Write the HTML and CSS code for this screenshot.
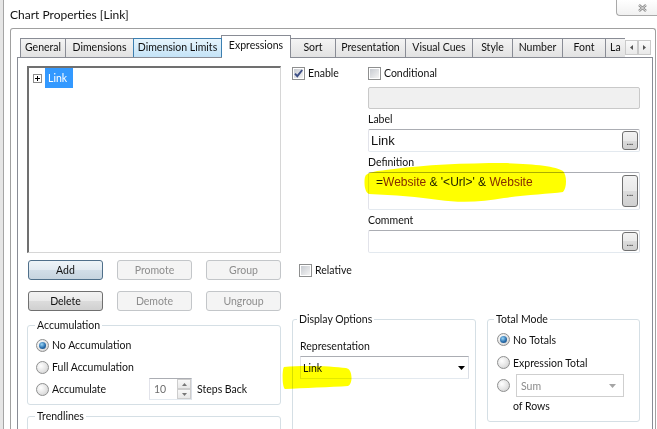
FILE: index.html
```html
<!DOCTYPE html>
<html lang="en">
<head>
    <meta charset="UTF-8">
    <meta name="viewport" content="width=device-width, initial-scale=1.0">
    <title>Chart Properties [Link]</title>
    <link rel="stylesheet" href="styles.css">
</head>
<body>

<div class="window">
<div class="frame">

    <div class="titlebar">
        <span class="title">Chart Properties [Link]</span>
        <div class="close-btn">
            <svg width="9" height="8" viewBox="0 0 9 8">
                <path d="M1 1l7 6M8 1L1 7" stroke="#8c8c8c" stroke-width="2.4" fill="none"/>
                <path d="M1 1l7 6M8 1L1 7" stroke="#fff" stroke-width="0.7" fill="none"/>
            </svg>
        </div>
    </div>

    <div class="client">
        <div class="tabstrip">
            <div class="tabs">
                <div class="tab">General</div>
                <div class="tab">Dimensions</div>
                <div class="tab hover">Dimension Limits</div>
                <div class="tab active">Expressions</div>
                <div class="tab">Sort</div>
                <div class="tab">Presentation</div>
                <div class="tab">Visual Cues</div>
                <div class="tab">Style</div>
                <div class="tab">Number</div>
                <div class="tab">Font</div>
                <div class="tab cut">La</div>
            </div>
            <div class="tab-scroll">
                <span class="scroll-btn"><svg width="3" height="5" viewBox="0 0 3 5"><path d="M3 0v5L0 2.5z" fill="#555"/></svg></span>
                <span class="scroll-btn"><svg width="3" height="5" viewBox="0 0 3 5"><path d="M0 0v5l3-2.5z" fill="#555"/></svg></span>
            </div>
        </div>

        <div class="tab-panel">
            <div class="top-area">

                <!-- expression list + buttons -->
                <div class="list-col">
                    <div class="tree-box">
                        <div class="tree-item">
                            <svg class="expander" width="9" height="9" viewBox="0 0 9 9">
                                <rect x="0.5" y="0.5" width="8" height="8" fill="#fff" stroke="#8c8c8c"/>
                                <path d="M2 4.5h5M4.5 2v5" stroke="#000"/>
                            </svg>
                            <span class="tree-label">Link</span>
                        </div>
                    </div>
                    <div class="btn-row">
                        <button class="btn default">Add</button>
                        <button class="btn" disabled>Promote</button>
                        <button class="btn" disabled>Group</button>
                    </div>
                    <div class="btn-row second">
                        <button class="btn">Delete</button>
                        <button class="btn" disabled>Demote</button>
                        <button class="btn" disabled>Ungroup</button>
                    </div>
                </div>

                <!-- expression settings -->
                <div class="expr-col">
                    <div class="check-line enable">
                        <span class="check">
                            <svg width="9" height="9" viewBox="0 0 9 9"><path d="M1 4.6l2.3 2.6L8.2 1" fill="none" stroke="#3d4f86" stroke-width="1.9"/></svg>
                        </span>
                        Enable
                    </div>
                    <div class="expr-fields">
                        <div class="check-line"><span class="check"></span>Conditional</div>
                        <div class="field cond-box"></div>

                        <div class="field-label">Label</div>
                        <div class="field">
                            <span class="field-text">Link</span>
                            <span class="dots-btn">...</span>
                        </div>

                        <div class="field-label">Definition</div>
                        <div class="field def-box">
                            <span class="def-text">=<span class="fieldname">Website</span> &amp; '&lt;Url&gt;' &amp; <span class="fieldname">Website</span></span>
                            <span class="dots-btn">...</span>
                            <svg class="marker def-marker" width="204" height="42" viewBox="0 0 204 42">
                                <path d="M1 14C2 9 12 8 30 6C60 2 100 0 140 0C170 1 192 3 199 8C203 12 203 25 199 29C185 31 160 32 140 35C120 39 95 40 75 37C55 34 30 32 5 31C0 29 0 18 1 14Z" fill="#ffff00"/>
                            </svg>
                        </div>

                        <div class="field-label">Comment</div>
                        <div class="field">
                            <span class="field-text"></span>
                            <span class="dots-btn">...</span>
                        </div>
                    </div>
                    <div class="check-line relative"><span class="check"></span>Relative</div>
                </div>
            </div>

            <div class="bottom-area">
                <div class="group-col">
                    <fieldset class="group accum">
                        <legend>Accumulation</legend>
                        <div class="radio-line"><span class="radio on"></span>No Accumulation</div>
                        <div class="radio-line"><span class="radio"></span>Full Accumulation</div>
                        <div class="radio-line steps">
                            <span class="radio-line"><span class="radio"></span>Accumulate</span>
                            <span class="spinner">
                                <span class="spinner-value">10</span>
                                <span class="spin-btns">
                                    <span class="spin-btn"><svg width="5" height="3" viewBox="0 0 5 3"><path d="M0 3h5L2.5 0z" fill="#777"/></svg></span>
                                    <span class="spin-btn"><svg width="5" height="3" viewBox="0 0 5 3"><path d="M0 0h5L2.5 3z" fill="#777"/></svg></span>
                                </span>
                            </span>
                            <span>Steps Back</span>
                        </div>
                    </fieldset>
                    <fieldset class="group trend">
                        <legend>Trendlines</legend>
                    </fieldset>
                </div>

                <fieldset class="group display">
                    <legend>Display Options</legend>
                    <div class="rep-label">Representation</div>
                    <div class="combo">
                        <span>Link</span>
                        <svg width="7" height="4" viewBox="0 0 7 4"><path d="M0 0h7L3.5 4z" fill="#000"/></svg>
                    </div>
                    <svg class="marker rep-marker" width="72" height="26" viewBox="0 0 72 26">
                        <path d="M2 3C20 1 50 2 64 4C71 5 71 20 66 22C50 23 20 24 3 25C0 24 0 5 2 3Z" fill="#ffff00"/>
                    </svg>
                </fieldset>

                <fieldset class="group total">
                    <legend>Total Mode</legend>
                    <div class="radio-line"><span class="radio on"></span>No Totals</div>
                    <div class="radio-line"><span class="radio"></span>Expression Total</div>
                    <div class="radio-line">
                        <span class="radio"></span>
                        <span class="combo sum">
                            <span>Sum</span>
                            <svg width="7" height="4" viewBox="0 0 7 4"><path d="M0 0h7L3.5 4z" fill="#a5a5a5"/></svg>
                        </span>
                    </div>
                    <div class="of-rows">of Rows</div>
                </fieldset>
            </div>
        </div>
    </div>

</div>
</div>

</body>
</html>
```

FILE: styles.css
```css
* {
    box-sizing: border-box;
}

body {
    margin: 0;
    background-color: #fff;
    font-family: Lato, "Noto Sans", sans-serif;
    font-size: 10.5px;
    color: #111;
    overflow: hidden;
}

.window {
    width: 657px;
    height: 429px;
    border-left: 3px solid #e6e6e6;
    overflow: hidden;
}

.frame {
    height: 100%;
    border-left: 1px solid #a5a5a5;
}

/* title bar */

.titlebar {
    display: flex;
    justify-content: space-between;
    align-items: flex-start;
    height: 28px;
}

.title {
    padding: 8px 0 0 6px;
    font-size: 12px;
    line-height: 14px;
}

.close-btn {
    width: 41px;
    height: 16px;
    border: 1px solid #a9a9a9;
    border-top: 0;
    border-right: 0;
    border-bottom-left-radius: 4px;
    background: linear-gradient(#fff, #f1f1f1);
    display: flex;
    align-items: center;
    padding-left: 21px;
}

/* client area */

.client {
    margin-left: 6px;
    width: 646px;
    height: 401px;
    border: 1px solid #a0a0a0;
    border-bottom: 0;
    border-radius: 3px 3px 0 0;
    padding: 6px 2px 0 6px;
}

.tabstrip {
    display: flex;
    height: 23px;
    padding-left: 3px;
}

.tabs {
    width: 605px;
    height: 23px;
    display: grid;
    grid-template-columns: 46px 68px 88px 69px 45px 70px 67px 40px 50px 43px 20px;
    align-items: end;
    overflow: hidden;
}

.tab {
    height: 19px;
    margin-bottom: 1px;
    border: 1px solid #898c95;
    border-bottom: 0;
    background: linear-gradient(#f4f4f4, #e2e2e2);
    text-align: center;
    line-height: 17px;
    white-space: nowrap;
    overflow: hidden;
}

.tab + .tab {
    margin-left: -1px;
}

.tab.cut {
    text-align: left;
    padding-left: 4px;
    border-right: 0;
}

.tab.hover {
    background: linear-gradient(#e6f4fc, #c4e3f7);
    border-color: #3c7fb1;
    position: relative;
    z-index: 1;
}

.tab.active {
    height: 23px;
    margin-bottom: 0;
    background: #fff;
    line-height: 19px;
}

.tab-scroll {
    display: flex;
    margin-top: 5px;
    align-self: flex-start;
}

.scroll-btn {
    width: 13px;
    height: 15px;
    border: 1px solid #cacaca;
    background: linear-gradient(#fbfbfb, #e9e9e9);
    display: grid;
    place-items: center;
}

.tab-panel {
    margin-top: -1px;
    height: 380px;
    border: 1px solid #898c95;
    background-color: #fff;
    padding: 8px 12px 0 9px;
}

/* upper part */

.top-area {
    display: grid;
    grid-template-columns: 254px 1fr;
    column-gap: 10px;
}

.tree-box {
    height: 187px;
    border-style: solid;
    border-width: 2px 1px 1px 2px;
    border-color: #707070 #d6d6d6 #d6d6d6 #707070;
    padding-left: 4px;
}

.tree-item {
    display: flex;
    align-items: center;
    height: 20px;
}

.tree-label {
    margin-left: 3px;
    width: 28px;
    padding-left: 3px;
    line-height: 20px;
    background-color: #3399ff;
    color: #fff;
}

.btn-row {
    display: flex;
    justify-content: space-between;
    margin: 7px 0 0 1px;
}

.btn-row.second {
    margin-top: 11px;
}

.btn {
    width: 75px;
    height: 20px;
    padding: 0;
    font: inherit;
    color: #111;
    border: 1px solid #707070;
    border-radius: 3px;
    background: linear-gradient(#f3f3f3, #e9e9e9 50%, #dcdcdc 50%, #d0d0d0);
    line-height: 18px;
}

.btn.default {
    border-color: #4f6f8a;
    background: linear-gradient(#eef4f8, #e1eaf1 50%, #d2dee8 50%, #c6d4df);
}

.btn:disabled {
    border-color: #c3c6c9;
    background: #f4f4f4;
    color: #8d8d8d;
}

.expr-col {
    display: grid;
    grid-template-columns: 77px 1fr;
    align-content: start;
}

.check-line {
    display: flex;
    align-items: center;
    gap: 3px;
    height: 14px;
}

.check-line.enable {
    margin-left: 1px;
}

.check-line.relative {
    grid-column: 1 / -1;
    margin: 10px 0 0 8px;
}

.check {
    width: 13px;
    height: 13px;
    flex: none;
    border: 1px solid #8e8f8f;
    padding: 1px;
    background: linear-gradient(135deg, #c7cbd1, #f4f4f4) content-box, #fff;
    display: grid;
    place-items: center;
}

.field {
    height: 23px;
    border: 1px solid;
    border-color: #abadb3 #dbdfe6 #e3e9ef #e2e3ea;
    border-radius: 2px;
    display: flex;
    justify-content: space-between;
    align-items: center;
    padding-right: 1px;
}

.field.cond-box {
    height: 22px;
    margin: 7px 0 1px;
    border-color: #c9c9c9;
    background-color: #f0f0f0;
}

.field-label {
    margin-top: 3px;
    line-height: 14px;
}

.field-label + .field {
    margin-top: 3px;
}

.field-text {
    padding-left: 2px;
    font-family: "Liberation Sans", Arial, sans-serif;
    font-size: 13px;
}

.def-box {
    position: relative;
    height: 38px;
    align-items: flex-start;
}

.def-text {
    padding: 2px 0 0 7px;
    font-family: "Liberation Sans", Arial, sans-serif;
    font-size: 12px;
    line-height: 14px;
    color: #222;
}

.fieldname {
    color: #852c00;
}

.dots-btn {
    width: 16px;
    height: 19px;
    align-self: center;
    border: 1px solid #707070;
    border-radius: 3px;
    background: linear-gradient(#f3f3f3, #e9e9e9 50%, #dcdcdc 50%, #d0d0d0);
    text-align: center;
    font-size: 9px;
    line-height: 9px;
    padding-top: 5px;
}

.def-box .dots-btn {
    height: 32px;
    padding-top: 12px;
}

.marker {
    position: absolute;
    mix-blend-mode: multiply;
}

.def-marker {
    left: -5px;
    top: -10px;
}

/* lower part */

.bottom-area {
    margin-top: 1px;
    display: grid;
    grid-template-columns: 254px 184px 1fr;
    column-gap: 11px;
    align-items: start;
}

.group {
    margin: 0;
    min-width: 0;
    padding: 2px 6px 3px 8px;
    border: 1px solid #d5dfe5;
    border-radius: 3px;
}

.group legend {
    padding: 0 2px;
    margin-left: -1px;
    line-height: 14px;
}

.group.accum {
    margin-top: 6px;
    height: 87px;
}

.group.trend {
    margin-top: 4px;
    height: 40px;
}

.group.display {
    position: relative;
    height: 130px;
    padding-left: 7px;
}

.group.display legend,
.group.total legend {
    margin-left: -3px;
}

.group.total {
    height: 110px;
    padding-left: 9px;
}

.radio-line {
    display: flex;
    align-items: center;
    gap: 3px;
    height: 22px;
}

.total .radio-line {
    height: 23px;
}

.radio {
    width: 13px;
    height: 13px;
    flex: none;
    border-radius: 50%;
    border: 1px solid #8e8f8f;
    background: radial-gradient(circle at 35% 35%, #fff, #e4e4e4 55%, #c9c9c9);
    display: grid;
    place-items: center;
}

.radio.on::after {
    content: "";
    width: 7px;
    height: 7px;
    border-radius: 50%;
    background: radial-gradient(circle at 40% 35%, #9ad6f7, #2a6fad 55%, #0d3b6b);
}

.radio-line.steps {
    display: grid;
    grid-template-columns: 108px 43px auto;
    column-gap: 5px;
}

.spinner {
    height: 22px;
    border: 1px solid;
    border-color: #abadb3 #dbdfe6 #e3e9ef #e2e3ea;
    display: flex;
    justify-content: space-between;
}

.spinner-value {
    padding-left: 4px;
    line-height: 20px;
    color: #6d6d6d;
}

.spin-btns {
    width: 14px;
    display: flex;
    flex-direction: column;
}

.spin-btn {
    flex: 1;
    border: 1px solid #cdcdcd;
    background: linear-gradient(#f8f8f8, #e8e8e8);
    display: grid;
    place-items: center;
}

.rep-label {
    margin-top: 11px;
    line-height: 14px;
}

.combo {
    margin-top: 3px;
    height: 23px;
    border: 1px solid;
    border-color: #abadb3 #dbdfe6 #e3e9ef #e2e3ea;
    display: flex;
    align-items: center;
    justify-content: space-between;
    padding: 0 3px 0 2px;
}

.combo.sum {
    margin: 0 0 0 3px;
    width: 108px;
    border-color: #cfcfcf;
    padding: 0 7px 0 4px;
    color: #8b8b8b;
}

.rep-marker {
    left: -11px;
    top: 38px;
}

.of-rows {
    margin: 2px 0 0 16px;
    line-height: 14px;
}
```
